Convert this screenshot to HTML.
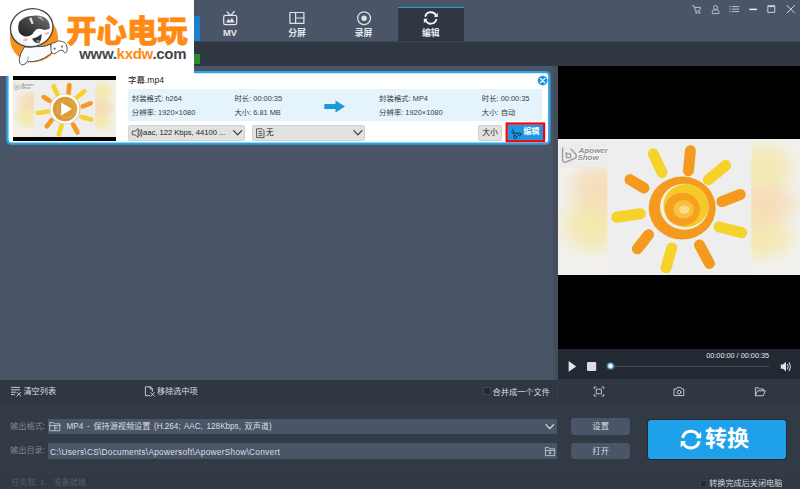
<!DOCTYPE html>
<html lang="zh-CN">
<head>
<meta charset="utf-8">
<title>ApowerShow</title>
<style>
*{margin:0;padding:0;box-sizing:border-box}
html,body{width:800px;height:489px;overflow:hidden;background:#4a5568}
body{position:relative;font-family:"Liberation Sans","Noto Sans CJK SC",sans-serif;font-size:7.5px;color:#333;line-height:1}
.abs{position:absolute}
.t{position:absolute;white-space:nowrap;line-height:1}
#topbar{left:0;top:0;width:800px;height:41px;background:#4a5568}
#toolbar{left:0;top:41px;width:800px;height:25px;background:#2f3742}
.tab{position:absolute;top:6px;width:67px;height:35px;text-align:center}
.tab .lbl{position:absolute;left:0;width:100%;top:28.5px;font-size:8.6px;font-weight:bold;color:#e4e8ed;line-height:10px;text-align:center}
.tab svg{position:absolute}
#list{left:0;top:66px;width:558px;height:313px;background:#4a5568}
#card{left:6px;top:71px;width:545px;height:74px;background:#fff;border:2.5px solid #2ea3ea;border-radius:5px}
#preview{left:558px;top:66px;width:242px;height:283px;background:#000}
#ctrl{left:558px;top:349px;width:242px;height:29.6px;background:#222933}
#btool{left:0;top:379.6px;width:800px;height:23px;background:#2f3742}
#bpanel{left:0;top:402.5px;width:800px;height:72px;background:#323a46}
#status{left:0;top:474.4px;width:800px;height:14.6px;background:#313945}
.info{font-size:7.4px;color:#3c3c3c}
.sel{position:absolute;background:#e1e1e1;border:0.6px solid #d2d2d2;border-radius:1.5px}
.lt{color:#d9dee4}
.field{position:absolute;left:48px;width:509.3px;height:15.5px;background:#4a5568}
.btn{position:absolute;left:571.3px;width:58.7px;height:16.2px;background:#4a5568;border-radius:3.4px;color:#d6dbe2;font-size:8.3px;text-align:center;line-height:16px}
#logo{left:0;top:0;width:194px;height:76px;background:#fff}
</style>
</head>
<body>
<svg width="0" height="0" style="position:absolute">
<defs>
  <radialGradient id="gp" cx="0.5" cy="0.5" r="0.5"><stop offset="0" stop-color="#f7d8aa" stop-opacity="1"/><stop offset="0.5" stop-color="#f7d8aa" stop-opacity="0.7"/><stop offset="1" stop-color="#f7d8aa" stop-opacity="0"/></radialGradient>
  <radialGradient id="gy" cx="0.5" cy="0.5" r="0.5"><stop offset="0" stop-color="#f4e7a6" stop-opacity="1"/><stop offset="0.5" stop-color="#f4e7a6" stop-opacity="0.7"/><stop offset="1" stop-color="#f4e7a6" stop-opacity="0"/></radialGradient>
  <g id="sunpic">
    <rect x="0" y="0" width="242" height="136" fill="#f2f0ea"/>
    <ellipse cx="36" cy="86" rx="40" ry="34" fill="url(#gy)" opacity="0.95"/>
    <ellipse cx="42" cy="50" rx="38" ry="32" fill="url(#gp)" opacity="0.85"/>
    <ellipse cx="206" cy="30" rx="36" ry="32" fill="url(#gy)" opacity="0.9"/>
    <ellipse cx="204" cy="98" rx="38" ry="28" fill="url(#gy)" opacity="0.9"/>
    <ellipse cx="204" cy="66" rx="42" ry="28" fill="url(#gp)" opacity="0.9"/>
    <rect x="49.4" y="0" width="143.7" height="136" fill="#eeeeee"/>
    <g fill="none" stroke-linecap="round" stroke-width="11">
      <path d="M95.3 14.8 L104 33.5" stroke="#f5d32a"/>
      <path d="M132.4 11.8 L130.4 31.8" stroke="#f39a1f"/>
      <path d="M167.6 26.6 L150.4 40.8" stroke="#f5d32a"/>
      <path d="M182.2 55.5 L163.8 62.6" stroke="#f39a1f"/>
      <path d="M161 88 L183.8 93.7" stroke="#f5d32a"/>
      <path d="M141.5 106 L151.4 124.5" stroke="#f39a1f"/>
      <path d="M113.8 109 L108 128.8" stroke="#f5d32a"/>
      <path d="M90.6 95.7 L79.4 109.8" stroke="#f39a1f"/>
      <path d="M82.4 74.7 L58.8 78.3" stroke="#f5d32a"/>
      <path d="M72 40.6 L86 49" stroke="#f39a1f"/>
    </g>
    <ellipse cx="124.2" cy="69.1" rx="33.5" ry="31.5" fill="#f39a1f"/>
    <ellipse cx="126.3" cy="67.8" rx="24.3" ry="23" fill="#f4f0e4"/>
    <ellipse cx="128" cy="66.6" rx="22.5" ry="21.6" fill="#f6c92b"/>
    <ellipse cx="124.3" cy="70.4" rx="17.6" ry="16.6" fill="#f5a01f"/>
    <ellipse cx="125.6" cy="70.4" rx="10.2" ry="9.4" fill="#f8c040"/>
    <ellipse cx="126.2" cy="70.8" rx="5.2" ry="4.2" fill="#fbe0a0" opacity="0.8"/>
  <rect x="1" y="3.6" width="48.4" height="25" fill="#ececeb"/>
  <g font-family="Liberation Sans, sans-serif" font-style="italic" font-weight="bold" font-size="8" fill="#8c8c8a">
    <text x="20.6" y="13.6" stroke="#ffffff" stroke-width="0.9" paint-order="stroke">Apower</text>
    <text x="19.4" y="21.2" stroke="#ffffff" stroke-width="0.9" paint-order="stroke">Show</text>
  </g>
  <path d="M4.6 8.4 V21.6 Q5 23.6 7 23.4 L17 19.4 Q19.4 17.6 17.6 15 L12.6 9.6 M8.4 13 V18.6 H12.6 V14.8 H8.4" fill="none" stroke="#9a9a98" stroke-width="1.3" stroke-linejoin="round"/>
</g>
</defs>
</svg>

<div id="topbar" class="abs"></div>
<div id="toolbar" class="abs"></div>

<!-- top bar -->
<div class="abs" style="left:194px;top:16px;width:5.7px;height:25.6px;background:#1e80cc;border-radius:0 1.5px 1.5px 0"></div>
<div class="abs" style="left:397.5px;top:6.5px;width:66.6px;height:34.5px;background:#2f3742;border-top:1.7px solid #1d9ce8"></div>
<div class="t" style="left:200px;width:60px;top:29.2px;text-align:center;font-size:9.3px;font-weight:bold;color:#e4e8ed">MV</div>
<div class="t" style="left:267px;width:60px;top:28.6px;text-align:center;font-size:8.8px;font-weight:bold;color:#e4e8ed">分屏</div>
<div class="t" style="left:333.6px;width:60px;top:28.6px;text-align:center;font-size:8.8px;font-weight:bold;color:#e4e8ed">录屏</div>
<div class="t" style="left:400.8px;width:60px;top:29.1px;text-align:center;font-size:8.8px;font-weight:bold;color:#e8ebee">编辑</div>
<svg class="abs" style="left:0;top:0" width="800" height="66" viewBox="0 0 800 66" fill="none" stroke="#dfe3e9" stroke-width="1.25" stroke-linecap="round" stroke-linejoin="round">
  <!-- MV icon -->
  <rect x="223.7" y="15.3" width="13" height="9.2" rx="1.6"/>
  <path d="M227.2 11.8 L229.9 15 M234.2 11.5 L231.2 15"/>
  <path d="M226 22.4 L228.4 18.8 L230 20.8 L232 17.8 L234.6 22.4 Z" fill="#dfe3e9" stroke="none"/>
  <!-- split icon -->
  <rect x="289.9" y="12.5" width="14" height="10.8" stroke-width="1.2"/>
  <path d="M295.6 12.5 V23.3 M295.6 18 H303.9" stroke-width="1.2"/>
  <!-- record icon -->
  <circle cx="364.1" cy="18.2" r="6.4" stroke-width="1.2"/>
  <circle cx="364.1" cy="18.2" r="2.7" fill="#dfe3e9" stroke="none"/>
  <!-- edit (convert) icon -->
  <g stroke="#f2f4f6" stroke-width="1.9" stroke-linecap="butt" fill="none">
    <path d="M425.2 16.79 A5.7 5.7 0 0 1 436.06 15.77"/>
    <path d="M436.4 19.11 A5.7 5.7 0 0 1 425.54 20.13"/>
    <path d="M437.76 12.56 V17.06 H434.04 Z" fill="#f2f4f6" stroke="none"/>
    <path d="M423.84 23.34 V18.84 H427.56 Z" fill="#f2f4f6" stroke="none"/>
    </g>
  <!-- window icons -->
  <g stroke="#b9c0ca" stroke-width="1">
    <path d="M692.4 5.8 H694 L695.6 11 H699.6 L700.6 7.4 H694.6"/>
    <circle cx="696.2" cy="12.8" r="0.6"/><circle cx="699.2" cy="12.8" r="0.6"/>
    <circle cx="715.6" cy="7.6" r="2"/>
    <path d="M712.3 13.2 V11.6 A1.6 1.6 0 0 1 713.9 10 H717.3 A1.6 1.6 0 0 1 718.9 11.6 V13.2 Z"/>
    <path d="M732.2 6.6 H738.8 M732.2 9.1 H738.8 M732.2 11.6 H738.8"/>
    <path d="M729.8 6.6 H730.3 M729.8 9.1 H730.3 M729.8 11.6 H730.3"/>
  </g>
  <path d="M749.3 9.4 H757" stroke="#e8ebef" stroke-width="1.5" stroke-linecap="butt"/>
  <rect x="768.2" y="5.8" width="6.6" height="6.6" stroke="#c9cfd7" stroke-width="1" />
  <path d="M768.2 6.3 H774.8" stroke="#c9cfd7" stroke-width="1.6" stroke-linecap="butt"/>
  <path d="M787 5.4 L794.6 13 M794.6 5.4 L787 13" stroke="#d5dae0" stroke-width="1"/>
  <!-- green sliver -->
  <rect x="194" y="54" width="6" height="10" fill="#2b8a2e" stroke="none"/>
</svg>
<div class="abs" style="left:0;top:41px;width:800px;height:1px;background:#3a434f"></div>
<div class="abs" style="left:0;top:42px;width:800px;height:1px;background:#333b47"></div>
<div id="list" class="abs"></div>
<svg class="abs" style="left:0;top:66px" width="558" height="84" viewBox="0 66 558 84"><rect x="7.4" y="72.1" width="541.9" height="71.5" rx="3.6" fill="#ffffff" stroke="#2ea3ea" stroke-width="2.4"/></svg>

<!-- card content -->
<div class="abs" style="left:13px;top:76px;width:103px;height:65px;background:#000"></div>
<svg class="abs" style="left:13px;top:79.5px" width="103" height="57.3" viewBox="0 0 242 136" preserveAspectRatio="none">
  <use href="#sunpic"/>
</svg>
<svg class="abs" style="left:48px;top:92px" width="34" height="34" viewBox="0 0 34 34">
  <circle cx="17" cy="17" r="15.6" fill="#c9c2b0" opacity="0.55"/>
  <circle cx="17" cy="17" r="13.4" fill="#dc8a16" fill-opacity="0.6" stroke="#ffffff" stroke-width="2.3"/>
  <path d="M13.2 10.6 L24 17 L13.2 23.4 Z" fill="#ffffff"/>
</svg>
<div class="t" style="left:128px;top:76.2px;font-size:8.5px;color:#222">字幕.mp4</div>
<div class="abs" style="left:127.8px;top:89px;width:414.4px;height:32px;background:#e5f3fc;border-radius:2px"></div>
<div class="t info" style="left:131.8px;top:94.7px">封装格式: h264</div>
<div class="t info" style="left:131.8px;top:108.9px">分辨率: 1920×1080</div>
<div class="t info" style="left:234.4px;top:94.7px">时长: 00:00:35</div>
<div class="t info" style="left:234.4px;top:108.9px">大小: 6.81 MB</div>
<div class="t info" style="left:379.1px;top:94.7px">封装格式: MP4</div>
<div class="t info" style="left:379.1px;top:108.9px">分辨率: 1920×1080</div>
<div class="t info" style="left:481.8px;top:94.7px">时长: 00:00:35</div>
<div class="t info" style="left:481.8px;top:108.9px">大小: 自动</div>
<svg class="abs" style="left:324px;top:99.5px" width="22" height="13" viewBox="0 0 22 13"><path d="M0.3 4 H11.5 V0.4 L21 6.4 L11.5 12.6 V9 H0.3 Z" fill="#2196dc"/></svg>
<div class="sel" style="left:128.2px;top:125.2px;width:116.4px;height:15.4px"></div>
<div class="t" style="left:143px;top:129.2px;font-size:7.6px;color:#222">aac, 122 Kbps, 44100 ...</div>
<div class="sel" style="left:251.9px;top:125.2px;width:112.9px;height:15.4px"></div>
<div class="t" style="left:266px;top:129px;font-size:7.6px;color:#222">无</div>
<div class="sel" style="left:478.2px;top:125.2px;width:23.9px;height:15.4px"></div>
<div class="t" style="left:478.2px;width:23.9px;text-align:center;top:128.8px;font-size:7.8px;color:#222">大小</div>
<svg class="abs" style="left:500px;top:120px" width="50" height="25" viewBox="500 120 50 25"><rect x="507.6" y="124.4" width="35.6" height="15.9" fill="#1f98e0"/><rect x="506.7" y="123.5" width="37.4" height="17.7" fill="none" stroke="#f8000c" stroke-width="2.2"/></svg>
<div class="t" style="left:523.4px;top:128.4px;font-size:8px;font-weight:bold;color:#fff">编辑</div>
<svg class="abs" style="left:120px;top:70px" width="440" height="80" viewBox="120 70 440 80" fill="none" stroke="#333" stroke-width="0.8" stroke-linecap="round" stroke-linejoin="round">
  <!-- speaker -->
  <path d="M132.6 131.2 H135 L138.2 128.6 V137.4 L135 134.8 H132.6 Z"/>
  <path d="M139.8 130.4 Q141.2 133 139.8 135.6 M141.4 129.4 Q143.2 133 141.4 136.6"/>
  <!-- chevrons -->
  <path d="M233.6 130.6 L237.6 134.8 L241.6 130.6" stroke-width="1.15"/>
  <path d="M353.9 130.6 L357.9 134.8 L361.9 130.6" stroke-width="1.15"/>
  <!-- doc icon -->
  <path d="M257 128.8 H262 L264 130.8 V137.6 H257 Z M259 131.6 H261.6 M259 133.6 H262 M259 135.6 H262"/>
  <!-- close btn -->
  <circle cx="542.6" cy="80.6" r="4.9" fill="#2196dc" stroke="none"/>
  <path d="M540.3 78.3 L544.9 82.9 M544.9 78.3 L540.3 82.9" stroke="#fff" stroke-width="1.1"/>
  <!-- scissors -->
  <g stroke="#1d2b3a" stroke-width="0.8">
    <circle cx="515.2" cy="137" r="1.5"/><circle cx="519.6" cy="134.2" r="1.5"/>
    <path d="M514.4 135.6 L512.6 129.2 M518.2 133.6 L511.4 132.4"/>
  </g>
</svg>
<div id="preview" class="abs"></div>

<svg class="abs" style="left:558px;top:139px" width="242" height="136" viewBox="0 0 242 136">
  <use href="#sunpic"/>
  </svg>
<div id="ctrl" class="abs"></div>
<div id="btool" class="abs"></div>
<div class="abs" style="left:553px;top:66px;width:5px;height:313.6px;background:#434d5c"></div>
<div class="abs" style="left:558px;top:378.6px;width:242px;height:2px;background:#2f3742"></div>
<div id="bpanel" class="abs"></div>
<div class="abs" style="left:557px;top:380px;width:1px;height:22px;background:#363e4a"></div>
<div id="status" class="abs"></div>
<div class="abs" style="left:0;top:473.4px;width:800px;height:1px;background:#353d49"></div>

<!-- player controls + bottom -->
<div class="t" style="left:706.2px;top:351.6px;font-size:7.3px;color:#e6e9ed">00:00:00 / 00:00:35</div>
<div class="abs" style="left:610px;top:365.9px;width:159px;height:1px;background:#454d5a"></div>
<div class="abs" style="left:606.4px;top:362.1px;width:8.4px;height:8.4px;border-radius:50%;background:radial-gradient(circle,#ffffff 0,#ffffff 24%,#9bd8f5 36%,rgba(60,160,220,0.45) 58%,rgba(40,140,210,0) 92%)"></div>
<div class="t lt" style="left:23.4px;top:388px;font-size:8.2px">清空列表</div>
<div class="t lt" style="left:157px;top:388px;font-size:8.15px">移除选中项</div>
<div class="abs" style="left:483px;top:387px;width:8.3px;height:8.4px;background:#232932;border:0.7px solid #3f4855"></div>
<div class="t lt" style="left:492.6px;top:388.5px;font-size:8.2px">合并成一个文件</div>
<div class="t" style="left:10px;top:422.6px;font-size:8.2px;color:#7c8693">输出格式:</div>
<div class="t" style="left:10px;top:447.4px;font-size:8.2px;color:#7c8693">输出目录:</div>
<div class="field" style="top:418.5px;height:15.9px"></div>
<div class="field" style="top:443.2px;height:15.7px"></div>
<div class="t lt" style="left:66.6px;top:422.7px;font-size:8.15px;word-spacing:1.45px">MP4 - 保持源视频设置 (H.264; AAC, 128Kbps, 双声道)</div>
<div class="t lt" style="left:50px;top:447.6px;font-size:8.3px;letter-spacing:0.26px">C:\Users\CS\Documents\Apowersoft\ApowerShow\Convert</div>
<div class="btn" style="top:418.2px;height:16.4px;line-height:16.6px">设置</div>
<div class="btn" style="top:443px;height:16.2px;line-height:16.6px">打开</div>
<div class="abs" style="left:647.6px;top:419.5px;width:138.6px;height:39.4px;background:#1fa1ea;border-radius:3px;box-shadow:0 0 0 1px #252c36"></div>
<div class="t" style="left:705px;top:427.6px;font-size:22px;font-weight:bold;color:#fff">转换</div>
<div class="t" style="left:11.2px;top:479.4px;font-size:8.1px;color:#515c6a">任务数: 1 &nbsp;&nbsp;&nbsp;准备就绪</div>
<div class="abs" style="left:699.7px;top:480px;width:7.3px;height:7px;background:#252c36;border:0.6px solid #39414e"></div>
<div class="t" style="left:709.2px;top:480.2px;font-size:8.15px;color:#d3d8df">转换完成后关闭电脑</div>
<svg class="abs" style="left:0;top:349px" width="800" height="140" viewBox="0 349 800 140" fill="none" stroke="#d3d8df" stroke-width="0.9" stroke-linecap="round" stroke-linejoin="round">
  <path d="M568.6 361 L576.2 366.4 L568.6 371.8 Z" fill="#e3e6ea" stroke="none"/>
  <rect x="587" y="362.1" width="9.2" height="8.8" rx="1.2" fill="#d9dce1" stroke="none"/>
  <!-- volume -->
  <path d="M780.8 364.6 H783 L786 361.8 V371.6 L783 368.8 H780.8 Z" fill="#dfe3e8" stroke="none"/>
  <path d="M787.6 364.4 Q788.8 366.7 787.6 369 M789.4 362.6 Q791.6 366.7 789.4 370.8" stroke="#dfe3e8" stroke-width="1"/>
  <!-- fullscreen -->
  <rect x="596.6" y="389.2" width="4.8" height="4.6" stroke="#cfd4db"/>
  <path d="M594.2 388.6 V387 H596 M602 387 H603.8 V388.6 M603.8 394.4 V396 H602 M596 396 H594.2 V394.4" stroke="#cfd4db"/>
  <!-- camera -->
  <path d="M674.4 389 H676.4 L677.4 387.4 H680.8 L681.8 389 H683.8 V395.6 H674.4 Z" stroke="#cfd4db"/>
  <circle cx="679.1" cy="392.2" r="1.9" stroke="#cfd4db"/>
  <!-- folder open -->
  <path d="M755.4 395.4 V387.8 H758.4 L759.4 389 H763.4 V390.6 M755.4 395.4 L757.4 390.8 H765.4 L763.4 395.4 Z" stroke="#cfd4db"/>
  <!-- clear list icon -->
  <path d="M11.4 387.4 H19.6 M11.4 389.8 H19.6 M11.4 392.2 H15.6 M11.4 394.6 H14.6" stroke-dasharray="1.2 0.5 20"/>
  <path d="M16.8 392.2 L20.8 396.2 M20.8 392.2 L16.8 396.2"/>
  <!-- remove selected icon -->
  <path d="M149.6 395.6 H145.4 V386.8 H150.4 L152.4 388.8 V391.4 M150.2 386.9 V389 H152.3"/>
  <path d="M150.8 392.6 L154.4 396.2 M154.4 392.6 L150.8 396.2"/>
  <!-- format folder icon -->
  <path d="M49.8 430.4 V422.6 H53.4 L54.4 423.8 H59.8 V430.4 Z M49.8 425.6 H59.8 M54.8 425.6 V430.4 M54.8 428 H57.4" stroke="#d0d5dc" stroke-width="0.8"/>
  <!-- chevron -->
  <path d="M546 424.6 L549.8 428.7 L553.6 424.6" stroke="#dde1e6" stroke-width="1.25"/>
  <!-- dir folder icon -->
  <path d="M545.4 455.2 V447.4 H548.6 L549.6 448.8 H554.6 V455.2 Z M545.4 450.4 H554.6 M550 451.4 V453.8 M548.9 452.8 L550 453.9 L551.1 452.8" stroke="#d0d5dc" stroke-width="0.8"/>
  <!-- convert icon -->
  <g stroke="#ffffff" stroke-width="3" stroke-linecap="butt" fill="none">
    <path d="M682.7 437.9 A8.35 8.35 0 0 1 698.6 436.4"/>
    <path d="M699.1 441.3 A8.35 8.35 0 0 1 683.2 442.8"/>
    <path d="M701.1 431.7 V438.3 H695.65 Z" fill="#ffffff" stroke="none"/>
    <path d="M680.7 447.5 V440.9 H686.15 Z" fill="#ffffff" stroke="none"/>
    </g>
</svg>
<div id="logo" class="abs">
<svg class="abs" style="left:0;top:0" width="80" height="72" viewBox="0 0 80 72">
  <defs>
    <linearGradient id="gg" x1="0" y1="1" x2="1" y2="0"><stop offset="0" stop-color="#1e1e1e"/><stop offset="0.55" stop-color="#4a4a4a"/><stop offset="1" stop-color="#777"/></linearGradient>
    <radialGradient id="gh" cx="0.6" cy="0.4" r="0.75"><stop offset="0.65" stop-color="#ffffff"/><stop offset="1" stop-color="#dcdaf0"/></radialGradient>
  </defs>
  <circle cx="34" cy="38.2" r="24" fill="#f7921c"/>
  
  <path d="M24.5 47 Q20 53 19.2 59.5 Q19.6 64.8 22.4 65 Q25.6 64.6 27.2 61.8 Q39 62.6 49.6 54.6 L52.4 52 L50.4 44 Q45 47 41 46.5 Z" fill="#fbfbff" stroke="#4a4a4a" stroke-width="1"/>
  <path d="M28 56.5 Q28.4 59 27.2 61.8" fill="none" stroke="#777" stroke-width="0.7"/>
  <path d="M51 47 Q50 43 55 42.5 Q58 39.5 62 41.5 Q66 42 67 47 Q68 52 65.5 53 Q63.5 52.5 62.5 50 Q59 50 56.5 52.5 Q54 55 52 53 Q50.5 51 51 47 Z" fill="#ffffff" stroke="#4a4a4a" stroke-width="0.9"/>
  <path d="M54.6 47.4 V50 M53.3 48.7 H55.9" stroke="#555" stroke-width="0.7"/>
  <path d="M62 45 L63 46.6 L62 48.2 L61 46.6 Z" fill="#666"/>
  <ellipse cx="31.7" cy="27.8" rx="21.4" ry="19" transform="rotate(-14 31.7 27.8)" fill="url(#gh)" stroke="#444" stroke-width="1.3"/>
  <path d="M19.2 21.8 Q24 16.5 30.8 16 Q37 14.5 42.4 16.6 Q48 18.5 49.5 24.3 Q50.3 28 49.5 28.8 Q46 30.3 43.7 29.8 Q39 28.2 36.6 29.2 Q34 31.5 32.1 34.4 Q28 37.3 24.3 36.2 Q19.5 34.5 18.5 30.8 Q17.6 25.5 19.2 21.8 Z" fill="url(#gg)"/>
  <path d="M29 18.2 L31.4 17.6 L33.6 23.6 L31.6 24.2 Z" fill="#fff" opacity="0.85"/>
  <path d="M37 17 L41 16.6 L44 21.5 Z" fill="#ddd" opacity="0.6"/>
  <path d="M32.1 38.8 Q37.5 37.5 41.7 34 Q41.8 39.5 39.5 43 Q37.2 43.6 35.3 42.4 Q33.4 41 32.1 38.8 Z" fill="#333"/>
  <ellipse cx="38" cy="41.4" rx="1.8" ry="1.3" fill="#888"/>
  <ellipse cx="25.6" cy="39.8" rx="2.6" ry="1.4" transform="rotate(-14 25.6 39.8)" fill="#f8b5c4"/>
  <ellipse cx="46.9" cy="33.4" rx="2.4" ry="1.3" transform="rotate(-14 46.9 33.4)" fill="#f8b5c4"/>
</svg>
<div class="t" id="lg1" style="left:66.2px;top:16.2px;font-size:30.4px;font-weight:900;color:#ff8a14;letter-spacing:0px;-webkit-text-stroke:0.6px #ff8a14;font-family:'Liberation Sans','Noto Sans CJK SC',sans-serif">开心电玩</div>
<div class="t" id="lg2" style="left:79.2px;top:46px;font-size:15px;letter-spacing:-0.3px;font-weight:bold;color:#474747">www.<span style="color:#ff8a14">kxdw</span>.com</div>
</div>
</body>
</html>
